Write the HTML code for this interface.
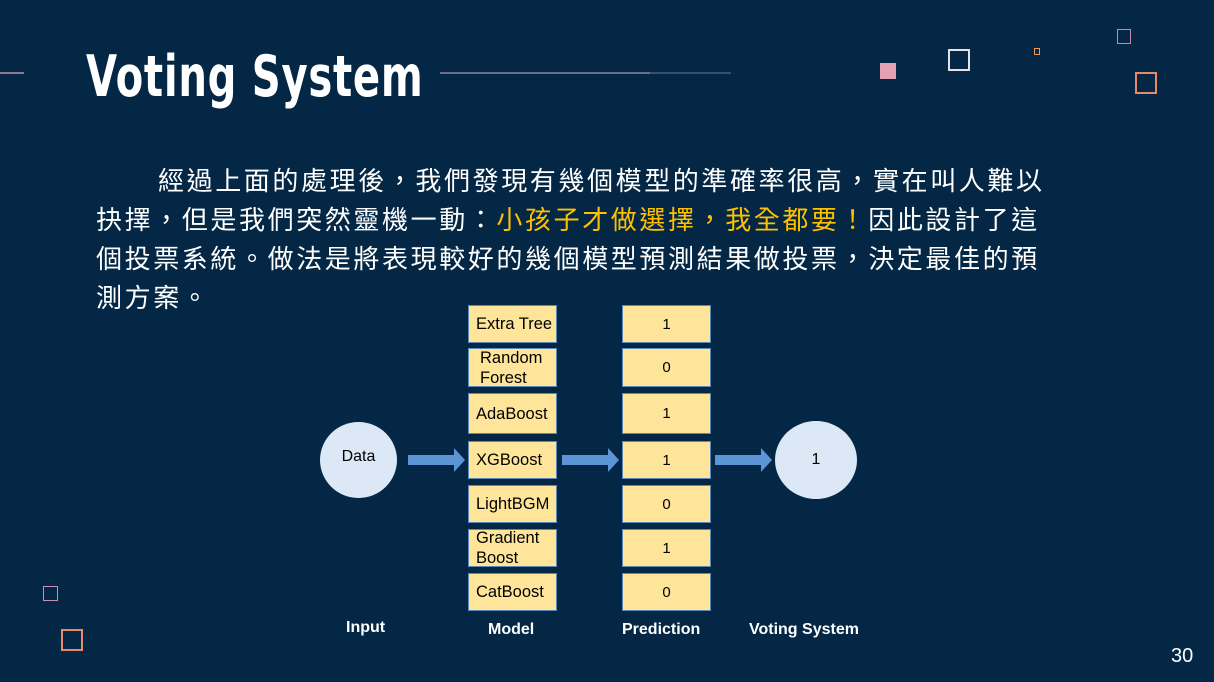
<!DOCTYPE html>
<html><head><meta charset="utf-8"><style>
*{margin:0;padding:0;box-sizing:border-box}
body{width:1214px;height:682px;background:#032744;position:relative;overflow:hidden;font-family:"Liberation Sans",Arial,sans-serif}
.a{position:absolute}
.t{position:absolute;left:86px;top:44px;font-family:"DejaVu Sans","Liberation Sans",sans-serif;font-weight:bold;font-size:57px;color:#fff;transform:scaleX(0.705);transform-origin:left top;white-space:nowrap;letter-spacing:1px}
.p{position:absolute;font-family:"Liberation Sans","Noto Sans CJK TC",sans-serif;font-size:26px;color:#fff;white-space:nowrap;line-height:39px;letter-spacing:2.6px}
.y{color:#ffc000}
.m{position:absolute;left:468px;width:89px;background:#ffe599;border:1px solid #5b88b6;font-size:16.5px;color:#000;display:flex;align-items:center;padding-left:7px;line-height:20px}
.q{position:absolute;left:622px;width:89px;background:#ffe599;border:1px solid #5b88b6;font-size:15px;color:#000;display:flex;align-items:center;justify-content:center}
.c{position:absolute;background:#dde8f6;border-radius:50%;display:flex;align-items:center;justify-content:center;font-size:16px;color:#000}
.l{position:absolute;top:618px;font-weight:bold;font-size:16px;color:#fff;white-space:nowrap}
.ar{position:absolute;height:24px}
</style></head><body>
<div class="a" style="left:0;top:72px;width:24px;height:2px;background:#8a7a92"></div>
<div class="t">Voting System</div>
<div class="a" style="left:440px;top:72px;width:210px;height:2px;background:#6d6d8a"></div>
<div class="a" style="left:650px;top:72px;width:81px;height:2px;background:#3a5068"></div>
<div class="a" style="left:880px;top:63px;width:16px;height:16px;background:#e6a0b5"></div>
<div class="a" style="left:948px;top:49px;width:22px;height:22px;border:2px solid #e6e0ea"></div>
<div class="a" style="left:1034px;top:48px;width:6px;height:7px;border:1.5px solid #f0965c"></div>
<div class="a" style="left:1117px;top:29px;width:14px;height:15px;border:1.5px solid #c88aa8"></div>
<div class="a" style="left:1135px;top:72px;width:22px;height:22px;border:2px solid #e8876a"></div>
<div class="a" style="left:43px;top:586px;width:15px;height:15px;border:1.5px solid #c890b0"></div>
<div class="a" style="left:61px;top:629px;width:22px;height:22px;border:2px solid #e8876a"></div>
<div class="a" style="left:1171px;top:645px;font-size:20px;color:#fff">30</div>

<div class="p" style="left:158px;top:162px">經過上面的處理後，我們發現有幾個模型的準確率很高，實在叫人難以</div>
<div class="p" style="left:96px;top:201px">抉擇，但是我們突然靈機一動：<span class="y">小孩子才做選擇，我全都要！</span>因此設計了這</div>
<div class="p" style="left:96px;top:240px">個投票系統。做法是將表現較好的幾個模型預測結果做投票，決定最佳的預</div>
<div class="p" style="left:96px;top:279px">測方案。</div>

<div class="m" style="top:305px;height:38px">Extra Tree</div>
<div class="m" style="top:348px;height:39px;padding-left:11px">Random<br>Forest</div>
<div class="m" style="top:393px;height:41px">AdaBoost</div>
<div class="m" style="top:441px;height:38px">XGBoost</div>
<div class="m" style="top:485px;height:38px">LightBGM</div>
<div class="m" style="top:529px;height:38px">Gradient<br>Boost</div>
<div class="m" style="top:573px;height:38px">CatBoost</div>

<div class="q" style="top:305px;height:38px">1</div>
<div class="q" style="top:348px;height:39px">0</div>
<div class="q" style="top:393px;height:41px">1</div>
<div class="q" style="top:441px;height:38px">1</div>
<div class="q" style="top:485px;height:38px">0</div>
<div class="q" style="top:529px;height:38px">1</div>
<div class="q" style="top:573px;height:38px">0</div>

<div class="c" style="left:320px;top:422px;width:77px;height:76px;padding-bottom:6px">Data</div>
<div class="c" style="left:775px;top:421px;width:82px;height:78px">1</div>

<svg class="ar" style="left:408px;top:448px" width="58" height="24"><polygon points="0,7 46,7 46,0 57,12 46,24 46,17 0,17" fill="#5b95d5"/></svg>
<svg class="ar" style="left:562px;top:448px" width="58" height="24"><polygon points="0,7 46,7 46,0 57,12 46,24 46,17 0,17" fill="#5b95d5"/></svg>
<svg class="ar" style="left:715px;top:448px" width="58" height="24"><polygon points="0,7 46,7 46,0 57,12 46,24 46,17 0,17" fill="#5b95d5"/></svg>

<div class="l" style="left:346px;top:619px">Input</div>
<div class="l" style="left:488px;top:621px">Model</div>
<div class="l" style="left:622px;top:621px">Prediction</div>
<div class="l" style="left:749px;top:621px">Voting System</div>
</body></html>
